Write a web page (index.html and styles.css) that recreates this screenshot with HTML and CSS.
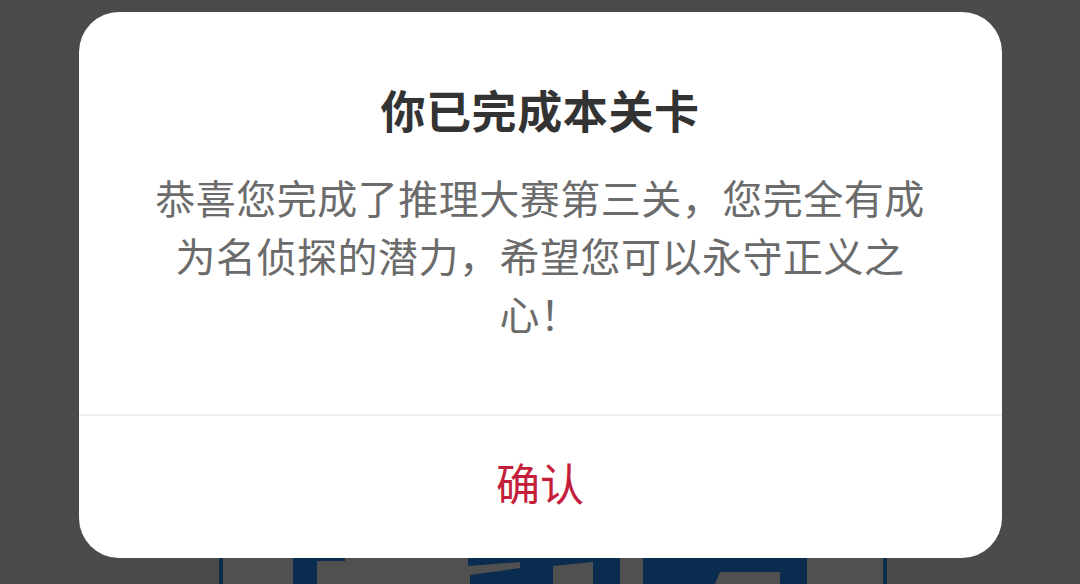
FILE: index.html
```html
<!DOCTYPE html>
<html lang="zh-CN">
<head>
<meta charset="utf-8">
<title>你已完成本关卡</title>
<link rel="stylesheet" href="styles.css">
</head>
<body>
<div class="page">
  <svg class="artwork" width="1080" height="584" viewBox="0 0 1080 584" aria-hidden="true">
    <rect x="223" y="540" width="660" height="44" fill="#505050"/>
    <rect x="219" y="540" width="4" height="44" fill="#0d2c4a"/>
    <rect x="883" y="540" width="4" height="44" fill="#0d2c4a"/>
    <rect x="293" y="540" width="24" height="44" fill="#0a2d4f"/>
    <rect x="317" y="556" width="28" height="5" fill="#0a2d4f"/>
    <polygon points="468,556 540,556 540,584 470,584 470,575 520,568 520,562 468,566" fill="#0a2d4f"/>
    <rect x="540" y="556" width="13" height="28" fill="#0a2d4f"/>
    <polygon points="553,556 593,556 593,562 553,566" fill="#0a2d4f"/>
    <rect x="593" y="556" width="27" height="28" fill="#0a2d4f"/>
    <polygon points="643,556 807,556 807,584 780,584 780,572 720,572 715,584 643,584" fill="#0a2d4f"/>
  </svg>
  <div class="dialog">
    <h1 class="title">你已完成本关卡</h1>
    <p class="message">恭喜您完成了推理大赛第三关，您完全有成为名侦探的潜力，希望您可以永守正义之心！</p>
    <div class="actions">
      <button class="confirm" type="button">确认</button>
    </div>
  </div>
</div>
</body>
</html>
```

FILE: styles.css
```css
html, body {
  margin: 0;
  padding: 0;
}

body {
  background: #4b4b4b;
  font-family: "Noto Sans CJK SC", "Noto Sans", sans-serif;
}

.page {
  position: relative;
  width: 1080px;
  height: 584px;
  overflow: hidden;
  display: flex;
  flex-direction: column;
  align-items: center;
}

.artwork {
  position: absolute;
  left: 0;
  top: 0;
}

.dialog {
  position: relative;
  margin-top: 12px;
  width: 923px;
  height: 546px;
  background: #ffffff;
  border-radius: 40px;
  display: flex;
  flex-direction: column;
  align-items: center;
  box-sizing: border-box;
  padding-top: 69px;
}

.title {
  margin: 0;
  font-size: 45px;
  line-height: 58px;
  font-weight: 700;
  color: #333333;
  letter-spacing: 0.6px;
}

.message {
  margin: 29px 0 0;
  width: 790px;
  font-size: 40px;
  line-height: 58px;
  color: #6b6b6b;
  text-align: center;
  letter-spacing: 0.5px;
  height: 174px;
}

.actions {
  margin-top: auto;
  width: 100%;
  height: 144px;
  border-top: 2px solid #eeeeee;
  box-sizing: border-box;
  display: flex;
  align-items: center;
  justify-content: center;
}

.confirm {
  border: 0;
  background: none;
  padding: 0;
  font-family: inherit;
  font-size: 44px;
  line-height: 1;
  color: #c41e3a;
  letter-spacing: 0;
  margin-bottom: 10px;
}
```
